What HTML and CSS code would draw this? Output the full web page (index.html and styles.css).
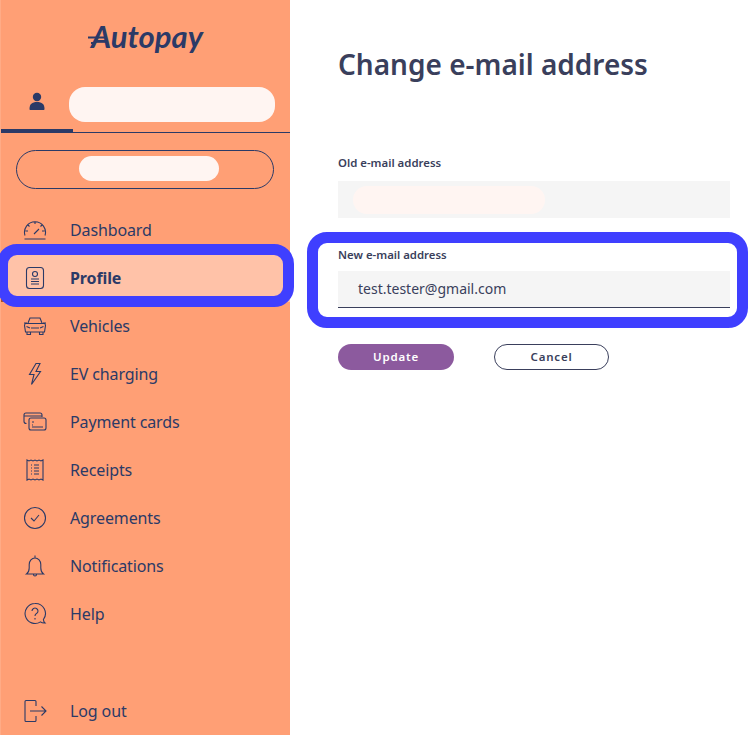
FILE: index.html
```html
<!DOCTYPE html>
<html lang="en">
<head>
<meta charset="utf-8">
<title>Change e-mail address</title>
<link rel="stylesheet" href="styles.css">
</head>
<body>
<div class="app">
  <aside class="sidebar">
    <div class="logo">
      <svg class="logo-dash" width="26" height="12" viewBox="0 0 26 12"><path d="M0 5.500H19M3 11h3" fill="none" stroke="#2b3a67" stroke-width="2"/></svg>
      <span class="logo-text">Autopay</span>
    </div>
    <div class="tabs">
      <div class="tab-icon">
        <svg width="16" height="18" viewBox="0 0 16 18"><circle cx="8" cy="5" r="4.200" fill="#2b3a67"/><path d="M0.500 17c0-5 2.500-7 7.500-7s7.500 2 7.500 7c0 .6-.5 1-1 1H1.500c-.6 0-1-.4-1-1z" fill="#2b3a67"/></svg>
      </div>
      <div class="tab-pill"></div>
    </div>
    <div class="account"><div class="account-pill"></div></div>
    <nav class="nav">
      <a class="nav-item">
        <svg class="ico" viewBox="0 0 24 24"><path d="M2 17.500a10.500 10.500 0 1 1 20 0M1.500 21h21M12 4v2M5 7l1.500 1.500M19 7l-1.500 1.500M2.500 13H5M19 13h2.500M11 16l5-5"/></svg>
        <span>Dashboard</span>
      </a>
      <a class="nav-item active">
        <svg class="ico" viewBox="0 0 24 24"><rect x="3.500" y="1.500" width="17" height="21" rx="3"/><circle cx="12" cy="8" r="2.500"/><path d="M8 13h8M8 15.500h8M8 18h8"/></svg>
        <span>Profile</span>
      </a>
      <a class="nav-item">
        <svg class="ico" viewBox="0 0 24 24"><path d="M5 9l2-5h10l2 5M3 9.500h18c1 0 1.500 1 1.500 2l-1 6.500H2.500l-1-6.500c0-1 .5-2 1.500-2zM4 18v2.500h3.500V18M16.500 18v2.500H20V18M1 9h3M20 9h3M8 14h8M3.500 12.500L7 14M20.500 12.500L17 14"/></svg>
        <span>Vehicles</span>
      </a>
      <a class="nav-item">
        <svg class="ico" viewBox="0 0 24 24"><path d="M13 1.500L6.500 12.500H11L8.500 22.500 17.500 9.500H13L17 1.500z"/></svg>
        <span>EV charging</span>
      </a>
      <a class="nav-item">
        <svg class="ico" viewBox="0 0 24 24"><path d="M3.500 13.500c-1.500 0-2.500-.5-2.500-2V5c0-1 1-2 2-2h14c1 0 2 1 2 2v2M1 6h18"/><rect x="6" y="8" width="17" height="12" rx="2"/><path d="M9 12h2M9 15h1M9 17h11"/></svg>
        <span>Payment cards</span>
      </a>
      <a class="nav-item">
        <svg class="ico" viewBox="0 0 24 24"><path d="M4 2l2 1 2-1 2 1 2-1 2 1 2-1 2 1 2-1v20l-2-1-2 1-2-1-2 1-2-1-2 1-2-1-2 1zM8 7h1M11 7h5M8 10h1M11 10h5M8 13h1M11 13h5M8 16h1M11 16h5"/></svg>
        <span>Receipts</span>
      </a>
      <a class="nav-item">
        <svg class="ico" viewBox="0 0 24 24"><circle cx="12" cy="12" r="10.500"/><path d="M8 12l3 3 5-6"/></svg>
        <span>Agreements</span>
      </a>
      <a class="nav-item">
        <svg class="ico" viewBox="0 0 24 24"><path d="M3.500 20c2-1.500 2.700-3 2.700-6v-3.500a5.800 6.500 0 0 1 11.600 0V14c0 3 .7 4.500 2.700 6zM12 1.500V4M10.500 20.500a1.500 1.500 0 0 0 3 0"/></svg>
        <span>Notifications</span>
      </a>
      <a class="nav-item">
        <svg class="ico" viewBox="0 0 24 24"><path d="M12 1.500a10 10 0 1 0 5.500 18.400c1.300 1 2.500 1.300 4.500 1.100-1-.8-1.500-2-1.600-3.500A10 10 0 0 0 12 1.500z"/><path d="M9 9a3 3 0 1 1 4.500 2.600c-1 .6-1.500 1.200-1.500 2.400M12 16v1.500"/></svg>
        <span>Help</span>
      </a>
      <a class="nav-item logout">
        <svg class="ico" viewBox="0 0 24 24"><path d="M13 7V2.500c0-.6-.4-1-1-1H3c-.6 0-1 .4-1 1v19c0 .6.400 1 1 1h9c.6 0 1-.4 1-1V17M7 12h16M18.500 7.500L23 12l-4.500 4.500"/></svg>
        <span>Log out</span>
      </a>
    </nav>
  </aside>
  <main class="content">
    <h1 class="title">Change e-mail address</h1>
    <form class="form">
      <label class="label">Old e-mail address</label>
      <div class="field field-old"><div class="field-pill"></div></div>
      <label class="label label-new">New e-mail address</label>
      <div class="field field-new">test.tester@gmail.com</div>
      <div class="actions">
        <button type="button" class="btn btn-primary">Update</button>
        <button type="button" class="btn btn-ghost">Cancel</button>
      </div>
    </form>
  </main>
</div>
<div class="mark mark-profile"></div>
<div class="mark mark-field"></div>
</body>
</html>
```
FILE: styles.css
```css
* { box-sizing: border-box; }
html, body { margin: 0; padding: 0; height: 735px; overflow: hidden; background: #fff; }
body { font-family: "Noto Sans", "Open Sans", sans-serif; color: #2b3a67; position: relative; }
.app { display: flex; height: 735px; }

.sidebar { width: 290px; flex: none; background: #ff9f75; border-left: 1px solid #ffab86; display: flex; flex-direction: column; }
.logo { height: 87px; display: flex; justify-content: center; padding-top: 18px; }
.logo-dash { margin: 14px -23px 0 0; position: relative; z-index: 1; }
.logo-text { font-family: "Lato", sans-serif; font-style: italic; font-weight: 700; font-size: 31px; line-height: 36px; }

.tabs { height: 46px; display: flex; border-bottom: 1px solid #2b3a67; position: relative; }
.tab-icon { width: 72px; height: 46px; border-bottom: 4px solid #2b3a67; display: flex; justify-content: center; padding-top: 5px; margin-bottom: -1px; flex: none; }
.tab-icon svg { display: block; }
.tab-pill { width: 206px; height: 35px; background: #fff5f2; border-radius: 16px; margin-left: -4px; }

.account { width: 258px; height: 39px; margin: 17px 0 0 15px; border: 1px solid #2b3a67; border-radius: 20px; display: flex; padding: 5px 0 0 62px; }
.account-pill { width: 140px; height: 25px; background: #fff5f2; border-radius: 13px; }

.nav { flex: 1; display: flex; flex-direction: column; margin-top: 17px; }
.nav-item { height: 48px; flex: none; display: flex; align-items: center; font-size: 16px; letter-spacing: -.12px; color: #2b3a67; }
.nav-item span { margin-left: 23px; }
.ico { width: 24px; height: 24px; margin-left: 22px; flex: none; fill: none; stroke: #2b3a67; stroke-width: 1.1; }
.active { background: #ffc2a8; font-weight: 700; box-shadow: inset 3px 0 #a8532a; }
.logout { margin-top: auto; }

.content { flex: 1; padding: 0 18px 0 48px; }
.title { margin: 41px 0 0; font-size: 28px; line-height: 46px; font-weight: 600; color: #3a3f5c; }
.form { margin-top: 68px; display: flex; flex-direction: column; }
.label { font-size: 11.4px; line-height: 16px; font-weight: 600; color: #3a3f5c; height: 26px; }
.field { background: #f5f5f5; width: 392px; }
.field-old { height: 37px; padding: 5px 0 0 15px; }
.field-pill { width: 192px; height: 28px; background: #fff5f2; border-radius: 14px; }
.label-new { margin-top: 29px; height: 24px; }
.field-new { height: 37px; border-bottom: 1px solid #3a3f5c; padding-left: 20px; font-size: 14px; line-height: 35px; color: #3a3f5c; }
.actions { display: flex; gap: 40px; margin-top: 36px; }
.btn { height: 26px; border-radius: 13px; font: 600 11.5px/1 "Noto Sans", sans-serif; letter-spacing: .8px; padding: 0; }
.btn-primary { width: 116px; border: none; background: #8c5a9e; color: #fff; }
.btn-ghost { width: 115px; border: 1px solid #3a3f5c; background: #fff; color: #3a3f5c; }

.mark { position: absolute; border: 11px solid #3f3fff; border-radius: 20px; pointer-events: none; }
.mark-profile { left: -3px; top: 244px; width: 297px; height: 63px; }
.mark-field { left: 307px; top: 232px; width: 441px; height: 96px; }
```
